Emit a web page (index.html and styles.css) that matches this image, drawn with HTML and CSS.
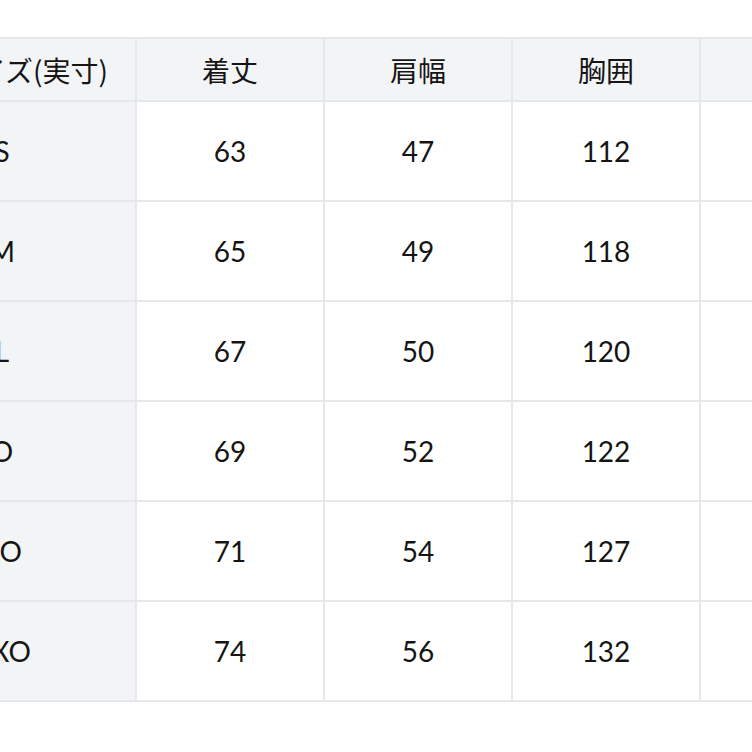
FILE: index.html
```html
<!DOCTYPE html>
<html lang="ja">
<head>
<meta charset="utf-8">
<title>サイズ表</title>
<link rel="stylesheet" href="styles.css">
</head>
<body>
<div class="view">
  <table class="size-table">
    <colgroup>
      <col class="c-label">
      <col class="c-val">
      <col class="c-val">
      <col class="c-val">
      <col class="c-val">
    </colgroup>
    <thead>
      <tr>
        <th class="label head-label">サイズ(実寸)</th>
        <th>着丈</th>
        <th>肩幅</th>
        <th>胸囲</th>
        <th>袖丈</th>
      </tr>
    </thead>
    <tbody>
      <tr><th class="label">S</th><td>63</td><td>47</td><td>112</td><td>60</td></tr>
      <tr><th class="label">M</th><td>65</td><td>49</td><td>118</td><td>61</td></tr>
      <tr><th class="label">L</th><td>67</td><td>50</td><td>120</td><td>62</td></tr>
      <tr><th class="label">O</th><td>69</td><td>52</td><td>122</td><td>63</td></tr>
      <tr><th class="label">XO</th><td>71</td><td>54</td><td>127</td><td>64</td></tr>
      <tr><th class="label">XXO</th><td>74</td><td>56</td><td>132</td><td>65</td></tr>
    </tbody>
  </table>
</div>
</body>
</html>
```

FILE: styles.css
```css
html, body {
  margin: 0;
  padding: 0;
  background: #ffffff;
}

.view {
  width: 752px;
  height: 752px;
  overflow: hidden;
  padding-top: 37px;
  box-sizing: border-box;
}

.size-table {
  border-collapse: collapse;
  table-layout: fixed;
  width: 1020px;
  margin-left: -133px;
  font-family: Lato, "Noto Sans", "Noto Sans CJK JP", sans-serif;
  color: #151515;
}

.c-label { width: 268px; }
.c-val { width: 188px; }

.size-table th,
.size-table td {
  border: 2px solid #e5e7ea;
  text-align: center;
  vertical-align: middle;
  padding: 0;
  font-size: 28px;
  font-weight: 400;
}

.size-table thead th {
  height: 61px;
  background: #f3f4f6;
  font-family: "Noto Sans CJK JP", sans-serif;
  font-size: 28px;
}

.size-table tbody td,
.size-table tbody th {
  height: 98px;
}

.size-table .label {
  background: #f3f4f6;
}

.size-table thead .head-label {
  text-align: right;
  padding-right: 27px;
}
```
